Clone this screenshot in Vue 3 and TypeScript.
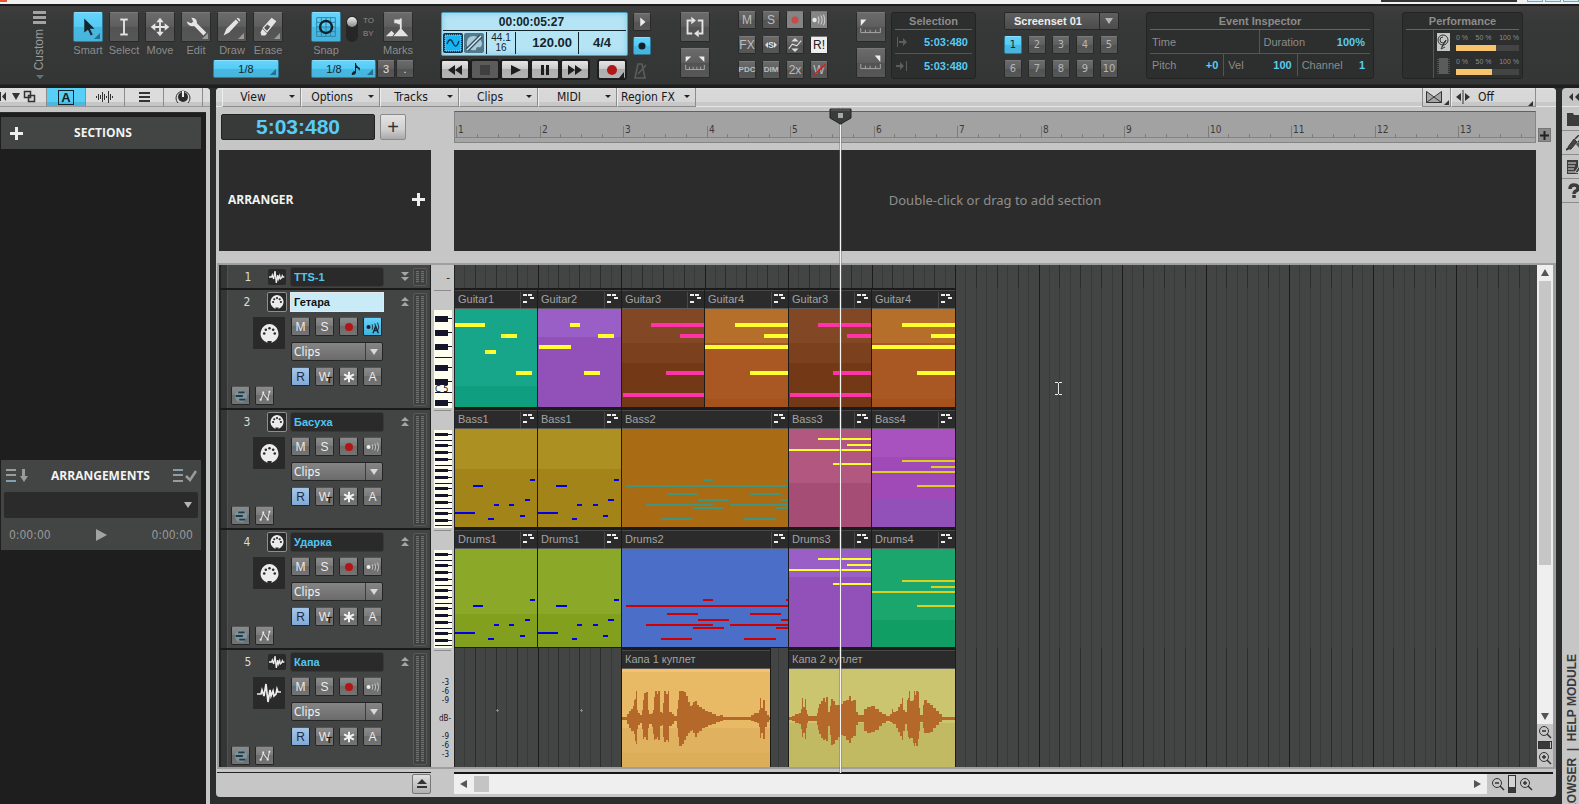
<script setup lang="ts">
import { computed, onMounted, onUnmounted, ref } from 'vue'

type Note = [number, number, number]
interface Clip {
  name: string
  width: number
  gap?: number
  bands: [string, number][]
  color?: string
  thick?: number
  notes?: Note[]
  wave?: [number, number, number][]
}
interface Track {
  id: number
  name: string
  kind: 'midi' | 'audio'
  mini?: boolean
  selected?: boolean
  clips: Clip[]
}

const MEASURE = 83.5
const H = 98

const tools = [
  { name: 'Smart', active: true, corner: true },
  { name: 'Select', active: false, corner: false },
  { name: 'Move', active: false, corner: false },
  { name: 'Edit', active: false, corner: true },
  { name: 'Draw', active: false, corner: true },
  { name: 'Erase', active: false, corner: true },
]
const menus = ['View', 'Options', 'Tracks', 'Clips', 'MIDI', 'Region FX']
const mixButtons = ['M', 'S', 'rec', 'echo', 'FX', 'solo', 'auto', 'R!', 'PDC', 'DIM', '2x', 'W']
const wideTools = ['folder', 'plug', 'notes', 'help']

const guitarA: Note[] = [[29, 14, 54], [58, 25, 25], [44, 62, 39], [1, 84, 82]]
const guitarB: Note[] = [[30, 14, 53], [59, 25, 24], [0, 36, 83], [45, 62, 38]]
const riff: Note[] = [[0, 83, 20], [18, 56, 10], [33, 89, 6], [39, 75, 5], [54, 75, 5], [65, 86, 5], [70, 70, 5], [75, 50, 5]]
const riffLate: Note[] = [[0, 83, 20], [18, 56, 11], [34, 89, 5], [39, 75, 5], [55, 75, 5], [65, 86, 5], [70, 70, 6], [76, 50, 5]]
const longPart: Note[] = [
  [81, 50, 10], [164, 50, 2], [4, 56, 162], [45, 64, 31], [128, 64, 31], [76, 70, 31], [159, 70, 7],
  [24, 75, 67], [108, 75, 58], [71, 78, 31], [154, 78, 12], [39, 89, 31], [122, 89, 32],
]
const lead: Note[] = [[29, 9, 53], [58, 15, 24], [0, 20, 82], [44, 34, 38]]
const leadLow: Note[] = [[30, 31, 53], [59, 37, 24], [0, 42, 83], [45, 56, 38]]

const violet: [string, number][] = [['#9a5fc6', 28], ['#9251b8', H]]
const brown: [string, number][] = [['#824825', 34], ['#7b411e', 54], ['#733917', H]]
const orange: [string, number][] = [['#b66e2b', 34], ['#aa5823', 90], ['#a6521c', H]]
const olive: [string, number][] = [['#ac9022', 40], ['#a38418', H]]
const lime: [string, number][] = [['#8ba828', 65], ['#82a01d', H]]

const tracks: Track[] = [
  { id: 1, name: 'TTS-1', kind: 'audio', mini: true, clips: [] },
  {
    id: 2, name: 'Гетара', kind: 'midi', selected: true,
    clips: [
      { name: 'Guitar1', width: 83, bands: [['#18a68a', 77], ['#109e80', 96], ['#10a069', H]], color: '#ffff2e', thick: 4, notes: [[0, 14, 30], [46, 25, 16], [30, 41, 11], [61, 62, 16]] },
      { name: 'Guitar2', width: 84, bands: violet, color: '#ffff2e', thick: 4, notes: [[32, 14, 10], [60, 25, 16], [1, 36, 32], [46, 62, 16]] },
      { name: 'Guitar3', width: 83, bands: brown, color: '#ff34a8', thick: 4, notes: guitarA },
      { name: 'Guitar4', width: 84, bands: orange, color: '#ffff2e', thick: 4, notes: guitarB },
      { name: 'Guitar3', width: 83, bands: brown, color: '#ff34a8', thick: 4, notes: guitarA },
      { name: 'Guitar4', width: 84, bands: orange, color: '#ffff2e', thick: 4, notes: guitarB },
    ],
  },
  {
    id: 3, name: 'Басуха', kind: 'midi',
    clips: [
      { name: 'Bass1', width: 83, bands: olive, color: '#0000e6', thick: 2, notes: riff },
      { name: 'Bass1', width: 84, bands: olive, color: '#0000e6', thick: 2, notes: riffLate },
      { name: 'Bass2', width: 167, bands: [['#aa6b15', H]], color: '#42957a', thick: 2, notes: longPart },
      { name: 'Bass3', width: 83, bands: [['#b2577f', 54], ['#a64d76', H]], color: '#ffff2e', thick: 2, notes: lead },
      { name: 'Bass4', width: 84, bands: [['#a852c0', 28], ['#a04ab8', 71], ['#9251b8', H]], color: '#dbd022', thick: 2, notes: leadLow },
    ],
  },
  {
    id: 4, name: 'Ударка', kind: 'midi',
    clips: [
      { name: 'Drums1', width: 83, bands: lime, color: '#0000e6', thick: 2, notes: riff },
      { name: 'Drums1', width: 84, bands: lime, color: '#0000e6', thick: 2, notes: riffLate },
      { name: 'Drums2', width: 167, bands: [['#4b6ec8', H]], color: '#d00000', thick: 2, notes: longPart },
      { name: 'Drums3', width: 83, bands: violet, color: '#ffff2e', thick: 2, notes: lead },
      { name: 'Drums4', width: 84, bands: [['#1ba66d', 71], ['#109e64', H]], color: '#dbd022', thick: 2, notes: leadLow },
    ],
  },
  {
    id: 5, name: 'Капа', kind: 'audio',
    clips: [
      {
        name: 'Капа 1 куплет', width: 149, gap: 167,
        bands: [['#f5c16f', 3], ['#e8ba66', 59], ['#e0b25f', 84], ['#dcae59', H]],
        wave: [[0, 1, 1], [4, 1, 1], [5, 4, 5], [7, 7, 9], [9, 9, 12], [11, 12, 12], [12, 18, 15], [13, 19, 22], [14, 27, 25], [15, 8, 10], [16, 5, 6], [18, 3, 4], [20, 8, 10], [21, 18, 20], [22, 25, 18], [24, 26, 21], [26, 8, 9], [27, 4, 5], [30, 5, 8], [31, 8, 15], [32, 21, 21], [33, 27, 20], [35, 24, 18], [36, 27, 21], [38, 6, 7], [40, 5, 6], [41, 15, 18], [42, 27, 23], [44, 24, 21], [46, 27, 23], [47, 6, 7], [50, 4, 5], [52, 2, 2], [55, 9, 9], [56, 18, 18], [57, 27, 27], [60, 27, 25], [62, 26, 21], [64, 22, 17], [66, 16, 14], [68, 12, 12], [70, 13, 11], [71, 16, 14], [73, 17, 18], [75, 13, 14], [77, 11, 12], [80, 9, 9], [83, 7, 8], [86, 6, 6], [90, 4, 5], [94, 2, 3], [98, 3, 2], [101, 1, 1], [127, 1, 1], [129, 3, 2], [132, 5, 3], [135, 5, 4], [137, 8, 8], [138, 20, 19], [139, 10, 14], [141, 18, 20], [143, 7, 8], [145, 3, 3], [147, 1, 1], [148, 1, 1]],
      },
      {
        name: 'Капа 2 куплет', width: 167, gap: 18,
        bands: [['#cbc56f', 54], ['#c1ba63', H]],
        wave: [[0, 1, 1], [3, 2, 2], [6, 4, 4], [10, 5, 5], [12, 9, 10], [13, 20, 18], [14, 11, 14], [16, 19, 20], [17, 8, 9], [18, 4, 4], [19, 2, 2], [28, 5, 6], [29, 10, 11], [30, 14, 15], [32, 17, 19], [34, 20, 21], [36, 16, 20], [37, 21, 22], [39, 6, 7], [41, 12, 16], [42, 19, 26], [44, 17, 25], [46, 13, 21], [49, 13, 18], [51, 14, 16], [54, 17, 17], [57, 18, 21], [60, 22, 24], [62, 17, 19], [64, 18, 17], [67, 6, 6], [69, 3, 3], [73, 3, 3], [75, 9, 12], [78, 11, 14], [82, 12, 13], [86, 9, 11], [90, 6, 7], [93, 4, 4], [97, 2, 2], [101, 4, 3], [103, 9, 4], [104, 6, 5], [107, 7, 9], [109, 11, 13], [111, 14, 17], [113, 20, 21], [114, 8, 12], [116, 6, 5], [118, 18, 12], [119, 20, 18], [120, 27, 20], [121, 17, 19], [124, 18, 24], [125, 27, 27], [126, 23, 24], [127, 27, 27], [129, 26, 20], [130, 10, 12], [131, 3, 3], [134, 13, 9], [135, 18, 14], [138, 15, 14], [141, 13, 13], [144, 10, 9], [147, 7, 6], [150, 4, 3], [153, 1, 1], [166, 1, 1]],
      },
    ],
  },
]

const eighths: string[] = []
const quarters: string[] = []
const bars: string[] = []
const ticks: string[] = []
for (let i = 0; i < 320; i++) {
  const x = Math.round((i * MEASURE) / 8)
  const seg = `M${x} 0h1v120h-1z`
  if (i % 8 === 0) bars.push(seg)
  else if (i % 2 === 0) quarters.push(seg)
  else eighths.push(seg)
  if (i % 2 === 0) ticks.push(i % 8 === 0 ? `M${x + 1} 14h1v12h-1z` : `M${x + 1} 22h1v4h-1z`)
}

const windowWidth = ref(window.innerWidth)
const onResize = () => { windowWidth.value = window.innerWidth }
onMounted(() => window.addEventListener('resize', onResize))
onUnmounted(() => window.removeEventListener('resize', onResize))
const barNumbers = computed(() => {
  const count = Math.max(1, Math.floor((windowWidth.value - 515) / MEASURE) + 1)
  return Array.from({ length: count }, (_, i) => ({ n: i + 1, x: Math.round(i * MEASURE) + 3 }))
})

const bigKeys = [6, 20, 34, 55, 69, 90]
const bigLines = [47, 82]
const smallKeys = [3, 14, 21, 28, 39, 46, 57, 64, 71, 82, 89]
const smallLines = [10, 35, 53, 78, 95]

function bandRects(bands: [string, number][]) {
  return bands.map(([fill, end], i) => {
    const y = i ? bands[i - 1][1] : 0
    return { fill, y, h: end - y }
  })
}
function wavePath(w: [number, number, number][]) {
  let top = `M0 49`
  let bottom = ''
  for (let i = 0; i < w.length - 1; i++) {
    top += `V${49 - w[i][1]}H${w[i + 1][0]}`
    const j = w.length - 2 - i
    bottom += `V${50 + w[j][2]}H${w[j][0]}`
  }
  return `${top}${bottom}Z`
}

const names = ref(tracks.map((t) => t.name))
</script>

<template>
  <div class="daw">
    <div class="titlebar"><i class="logo"></i><i class="wintitle"></i><i v-for="n in 3" :key="n" class="winbtn"></i></div>

    <header class="toolbar">
      <button class="custom" aria-label="Custom modules">
        <i class="burger"></i><span>Custom</span><i class="tri blue"></i>
      </button>

      <div class="tools">
        <div v-for="t in tools" :key="t.name" class="tool">
          <button class="btn big" :class="{ on: t.active, corner: t.corner }" :aria-label="t.name">
            <svg viewBox="0 0 30 30" width="28" height="28">
              <path v-if="t.name === 'Smart'" d="M11 6v15l4-3 3 6 2-1-3-6h5z" fill="#16242b" />
              <path v-else-if="t.name === 'Select'" d="M11 7h3l1 1 1-1h3M15 8v14M11 23h3l1-1 1 1h3" fill="none" stroke="#e4e4e4" stroke-width="2" />
              <g v-else-if="t.name === 'Move'" fill="#e4e4e4"><path d="M14 9h2v5h5v2h-5v5h-2v-5H9v-2h5z" /><path d="M15 5l4 5h-8zM15 25l4-5h-8zM5 15l5-4v8zM25 15l-5-4v8z" /></g>
              <path v-else-if="t.name === 'Edit'" d="M5 9l5 2 2-2-2-4q6 0 6 5l0 1 10 10-3 3-10-10q-6 1-8-5z" fill="#e4e4e4" />
              <path v-else-if="t.name === 'Draw'" d="M6 24l3-7L19 7l3 3-10 11zM20 6l1-1q2 0 3 3l-1 1z" fill="#e4e4e4" />
              <g v-else fill="#e4e4e4"><path d="M9 17l5 5-2 2H8l-1-3z" /><path d="M10 16l9-10 4 3-9 11z" fill="none" stroke="#e4e4e4" stroke-width="1.4" /><path d="M14 12l5-6 4 3-5 6z" /></g>
            </svg>
          </button>
          <span>{{ t.name }}</span>
        </div>
        <button class="btn on corner res">1/8</button>
      </div>

      <div class="snap">
        <div class="snaprow">
          <div class="tool">
            <button class="btn big on" aria-label="Snap">
              <svg viewBox="0 0 30 30" width="28" height="28" fill="none"><path d="M5 5h20v20H5zM10 5v20M15 5v20M20 5v20M5 10h20M5 15h20M5 20h20" stroke="#2c7fa3" /><circle cx="15" cy="15" r="6.500" stroke="#12222b" stroke-width="2.500" /></svg>
            </button>
            <span>Snap</span>
          </div>
          <button class="toggle" role="switch" aria-checked="true" aria-label="Snap to or by"></button>
          <div class="toby"><span>TO</span><span>BY</span></div>
          <div class="tool">
            <button class="btn big" aria-label="Marks">
              <svg viewBox="0 0 30 30" width="28" height="28" fill="#e4e4e4"><path d="M2 25l6-6 3 3-2 3zM10 25l8-9 8 9zM17 6h2v11h-2zM11 7h8v5h-4l-1-1h-3z" /></svg>
            </button>
            <span>Marks</span>
          </div>
        </div>
        <div class="snapres">
          <button class="btn on corner">1/8
            <svg viewBox="0 0 10 12" width="10" height="12"><path d="M5 0q0 3 4 5q0 2-1 3q0-3-3-3v5q-1 2-3 2t-1-2q1-2 3-2V0z" fill="#14242c" /></svg>
          </button>
          <button class="btn">3</button>
          <button class="btn">.</button>
        </div>
      </div>

      <div class="transport">
        <div class="lcdrow">
          <div class="lcd">
            <div class="lcdtime">00:00:05:27</div>
            <div class="lcdinfo">
              <svg viewBox="0 0 20 20" width="20" height="20"><rect width="20" height="20" rx="2" fill="#12324a" /><rect x="2" y="2" width="16" height="16" fill="#18b5f3" stroke="#9adfff" stroke-dasharray="1 1" /><path d="M4 11q3-8 6-1t6-2" fill="none" stroke="#12324a" stroke-width="1.3" /></svg>
              <svg viewBox="0 0 20 20" width="20" height="20"><rect width="20" height="20" rx="2" fill="#54798a" /><path d="M3 13Q2 3 9 3t9 7q0 5-4 4-2 0-2 3-7 1-9-4z" fill="#a9cbd8" /><path d="M3 17L17 3" stroke="#33505e" stroke-width="4" /><path d="M3 17L17 3" stroke="#d6edf6" stroke-width="1.5" /></svg>
              <span class="rate">44.1<br />16</span>
              <b class="tempo">120.00</b>
              <b class="meterval">4/4</b>
            </div>
          </div>
          <div class="lcdside">
            <button class="btn" aria-label="Expand"><svg viewBox="0 0 18 18" width="16" height="16"><path d="M7 4l6 5-6 5z" fill="#eee" /></svg></button>
            <button class="btn on" aria-label="Audio engine"><svg viewBox="0 0 18 18" width="16" height="16"><circle cx="9" cy="9" r="4" fill="#10202a" /></svg></button>
          </div>
        </div>
        <div class="playrow">
          <button class="pbtn" aria-label="Rewind"><svg viewBox="0 0 28 18"><path d="M14 4v10l-7-5zM21 4v10l-7-5z" /></svg></button>
          <button class="pbtn dim" aria-label="Stop"><svg viewBox="0 0 28 18"><path d="M9 4h10v10H9z" /></svg></button>
          <button class="pbtn" aria-label="Play"><svg viewBox="0 0 28 18"><path d="M10 4l10 5-10 5z" /></svg></button>
          <button class="pbtn" aria-label="Pause"><svg viewBox="0 0 28 18"><path d="M10 4h3v10h-3zM15 4h3v10h-3z" /></svg></button>
          <button class="pbtn" aria-label="Forward"><svg viewBox="0 0 28 18"><path d="M7 4v10l7-5zM14 4v10l7-5z" /></svg></button>
          <button class="pbtn rec" aria-label="Record"><svg viewBox="0 0 28 18"><circle cx="14" cy="9" r="5" fill="#b01717" /><path d="M26 11v6h-5z" /></svg></button>
          <svg class="metro" viewBox="0 0 22 20" width="22" height="20"><path d="M6 18L9 4h4l3 14zM9 14l8-9" fill="none" stroke="#5c5c5c" stroke-width="1.6" /></svg>
        </div>
      </div>

      <div class="stack">
        <button class="btn big" aria-label="Loop"><svg viewBox="0 0 30 30" width="28" height="28"><path d="M11 8H7v14h5M19 22h4V8h-5" fill="none" stroke="#e4e4e4" stroke-width="2" /><path d="M11 4l5 4-5 4zM19 18v8l-5-4z" fill="#e4e4e4" /></svg></button>
        <button class="btn big" aria-label="Punch"><svg viewBox="0 0 30 30" width="28" height="28"><path d="M5 8h6l-6 6zM25 8h-6l6 6z" fill="#eee" /><path d="M5 17v5h20v-5M9 19v3M13 19v3M17 19v3M21 19v3" fill="none" stroke="#aaa" /></svg></button>
      </div>

      <div class="mixgrid">
        <button v-for="m in mixButtons" :key="m" class="btn sm" :class="{ white: m === 'R!', lit: m === 'rec' || m === 'echo', tiny: m === 'PDC' || m === 'DIM' }" :aria-label="m">
          <svg v-if="m === 'rec'" viewBox="0 0 18 18" width="16" height="16"><circle cx="9" cy="9" r="4" fill="#c94b48" /></svg>
          <svg v-else-if="m === 'echo'" viewBox="0 0 18 18" width="16" height="16"><circle cx="4" cy="9" r="2.500" fill="#e8e8e8" /><path d="M8 5q2 4 0 8M11 4q3 5 0 10M14 3q3 6 0 12" fill="none" stroke="#ccc" stroke-width="1.2" /></svg>
          <svg v-else-if="m === 'auto'" viewBox="0 0 18 18" width="16" height="16"><path d="M9 1l4 4H5zM9 17l4-4H5z" fill="#ddd" /><path d="M2 13l4-5 5 2 5-6" fill="none" stroke="#ddd" stroke-width="1.300" /></svg>
          <template v-else-if="m === 'solo'"><i class="sl"></i><span class="solo">S</span><i class="sr"></i></template>
          <template v-else>{{ m }}</template>
          <svg v-if="m === 'W'" class="strike" viewBox="0 0 18 18" width="16" height="16"><path d="M3 15L16 3" stroke="#d02020" stroke-width="2" /></svg>
        </button>
      </div>

      <div class="selgroup">
        <div class="stack">
          <button class="btn big" aria-label="Set from"><svg viewBox="0 0 30 30" width="28" height="28"><path d="M4 7h6l-6 7z" fill="#eee" /><path d="M4 16v5h21v-5M9 18v3M14 18v3M20 18v3" fill="none" stroke="#aaa" /></svg></button>
          <button class="btn big" aria-label="Set thru"><svg viewBox="0 0 30 30" width="28" height="28"><path d="M25 7h-6l6 7z" fill="#eee" /><path d="M4 16v5h21v-5M9 18v3M14 18v3M20 18v3" fill="none" stroke="#aaa" /></svg></button>
        </div>
        <section class="panel sel">
          <h2>Selection</h2>
          <div class="selrow"><svg viewBox="0 0 12 12" width="12" height="12"><path d="M1 1h1v10H1zM3 5h4V2l4 4-4 4V7H3z" fill="#5d5d5d" /></svg><b>5:03:480</b></div>
          <div class="selrow"><svg viewBox="0 0 12 12" width="12" height="12"><path d="M10 1h1v10h-1zM0 5h4V2l4 4-4 4V7H0z" fill="#5d5d5d" /></svg><b>5:03:480</b></div>
        </section>
      </div>

      <div class="screenset">
        <div class="selwrap"><select aria-label="Screenset"><option>Screenset 01</option></select><i class="tri"></i></div>
        <button v-for="n in 10" :key="n" class="btn sm num" :class="{ on: n === 1 }">{{ n }}</button>
      </div>

      <section class="panel inspector">
        <h2>Event Inspector</h2>
        <div class="irow two"><p><span>Time</span></p><p><span>Duration</span><b>100%</b></p></div>
        <div class="irow three"><p><span>Pitch</span><b>+0</b></p><p><span>Vel</span><b>100</b></p><p><span>Channel</span><b>1</b></p></div>
      </section>

      <section class="panel perf">
        <h2>Performance</h2>
        <div class="perfbody">
          <div v-for="(v, i) in [63, 57]" :key="v" class="perfrow">
            <svg v-if="i === 0" viewBox="0 0 13 18" width="13" height="18"><rect width="13" height="18" fill="#c6c6c6" /><circle cx="6" cy="7" r="5" fill="none" stroke="#333" /><path d="M6 4a3 3 0 1 0 3 3l-4 7M8 8l-4 8 4-2" fill="none" stroke="#333" /></svg>
            <svg v-else viewBox="0 0 13 18" width="13" height="18"><rect x="2" y="1" width="9" height="16" fill="#5b5b5b" /><path d="M1 2v16M12 2v16" stroke="#777" stroke-dasharray="1 1" /></svg>
            <div class="perfbar"><div class="scale"><span>0 %</span><span>50 %</span><span>100 %</span></div><div class="bar"><i :style="{ width: v + '%' }"></i></div></div>
          </div>
        </div>
      </section>
    </header>

    <div class="work">
      <aside class="left">
        <nav class="tabs">
          <button class="tab first" aria-label="Dock"><svg viewBox="0 0 46 18" width="46" height="18"><path d="M0 4h1v9H0zM6 4v9L2 8.500z" fill="#333" /><path d="M12 5h8l-4 7z" fill="#333" /><path d="M24.500 3.500h6v6h-6zM28.500 7.500h6v6h-6z" fill="#d5d5d5" stroke="#333" stroke-width="1.500" /></svg></button>
          <button class="tab on" aria-label="Arranger"><b>A</b></button>
          <button class="tab" aria-label="Clip"><svg viewBox="0 0 18 12" width="18" height="12"><path d="M.5 5v2M2.500 3v6M4.500 4v4M6.500 1v10M8.500 3v6M10.500 5v2M12.500 0v12M14.500 3v6M16.500 5v2" stroke="#333" /></svg></button>
          <button class="tab" aria-label="Track"><i class="lines"></i></button>
          <button class="tab" aria-label="ProChannel"><svg viewBox="0 0 18 16" width="18" height="16"><path d="M4 14A7 7 0 1 1 14 14" fill="none" stroke="#333" /><circle cx="9" cy="8" r="5" fill="#2c2c2c" /><path d="M9 2v6" stroke="#eee" stroke-width="2" /></svg></button>
          <span class="tab rest"></span>
        </nav>
        <div class="leftbody">
          <div class="sections"><button class="plus" aria-label="Add section"></button><h3>SECTIONS</h3></div>
          <div class="arrs">
            <div class="arrhead">
              <svg viewBox="0 0 22 14" width="22" height="14"><path d="M0 1h10M0 6h10" stroke="#9b9b9b" stroke-width="2" /><path d="M0 12h10" stroke="#7fa0ad" stroke-width="2" /><path d="M16 0h3v7h3l-4 6-4-6h2z" fill="#9b9b9b" /></svg>
              <h3>ARRANGEMENTS</h3>
              <svg viewBox="0 0 24 14" width="24" height="14"><path d="M0 1h10" stroke="#7fa0ad" stroke-width="2" /><path d="M0 6h10M0 12h10" stroke="#9b9b9b" stroke-width="2" /><path d="M13 7l4 4 6-9" fill="none" stroke="#9b9b9b" stroke-width="2.500" /></svg>
            </div>
            <div class="arrsel"><select aria-label="Arrangement"><option></option></select><i class="tri"></i></div>
            <div class="arrtime"><span>0:00:00</span><button aria-label="Play arrangement"></button><span>0:00:00</span></div>
          </div>
        </div>
      </aside>

      <main class="main">
        <nav class="menubar">
          <button v-for="m in menus" :key="m" class="menu"><span>{{ m }}</span><i></i></button>
          <span class="fill"></span>
          <button class="menu xf" aria-label="Crossfade"><svg viewBox="0 0 26 16" width="26" height="16"><path d="M2.500 2.500v11h15v-11l-7.500 6z" fill="#a5a5a5" /><path d="M2.500 2.500v11h15v-11l-15 11M2.500 2.500l15 11" fill="none" stroke="#333" /><path d="M25 11v5h-5z" fill="#333" /></svg></button>
          <div class="menu off"><svg viewBox="0 0 16 14" width="16" height="14"><path d="M6 3v8L1 7zM10 3v8l5-4zM7.500 0h1v14h-1z" fill="#333" /></svg><select aria-label="Ripple edit"><option>Off</option></select><svg class="cnr" viewBox="0 0 5 5" width="5" height="5"><path d="M5 0v5H0z" fill="#333" /></svg></div>
          <span class="end"></span>
        </nav>

        <div class="rulerrow">
          <div class="now">
            <output>5:03:480</output>
            <button aria-label="Add track">+</button>
          </div>
          <div class="ruler">
            <svg width="100%" height="31">
              <path :d="ticks.join('')" fill="#7c7c7c" />
              <text v-for="b in barNumbers" :key="b.n" :x="b.x" y="21">{{ b.n }}</text>
            </svg>
          </div>
          <button class="miniadd" aria-label="Add ruler"><svg viewBox="0 0 9 9" width="9" height="9"><path d="M4.500 0v9M0 4.500h9" stroke="#222" stroke-width="2" /></svg></button>
        </div>

        <div class="arrangerrow">
          <div class="arrname"><h3>ARRANGER</h3><button class="plus" aria-label="Add arrangement"></button></div>
          <div class="arrlane">Double-click or drag to add section</div>
        </div>

        <div class="tracks">
          <div class="rows">
            <div v-for="(t, ti) in tracks" :key="t.id" class="row" :class="{ mini: t.mini }">
              <div class="head">
                <div class="side">
                  <div class="idline">
                    <span class="num">{{ t.id }}</span>
                    <span class="kind" :class="t.kind">
                      <svg v-if="t.kind === 'midi'" viewBox="0 0 18 18" width="14" height="14"><path d="M9 0a9 9 0 0 1 5 16q-2 1-3 2v-2H7v2q-1-1-3-2A9 9 0 0 1 9 0z" fill="#ececec" /><g fill="#2a2a2a"><circle cx="4" cy="9" r="1.400" /><circle cx="5.500" cy="5.500" r="1.400" /><circle cx="9" cy="4" r="1.400" /><circle cx="12.500" cy="5.500" r="1.400" /><circle cx="14" cy="9" r="1.400" /></g></svg>
                      <svg v-else viewBox="0 0 24 18" width="16" height="14"><path d="M0 9h4l1-3 2 6 2-12 2 18 2-12 1 6 2-5 1 5 2-2 1-3 1 2h2" fill="none" stroke="#ececec" stroke-width="2" /></svg>
                    </span>
                  </div>
                  <template v-if="!t.mini">
                    <div class="bigkind">
                      <svg v-if="t.kind === 'midi'" viewBox="0 0 18 18" width="19" height="19"><path d="M9 0a9 9 0 0 1 5 16q-2 1-3 2v-2H7v2q-1-1-3-2A9 9 0 0 1 9 0z" fill="#ececec" /><g fill="#2a2a2a"><circle cx="4" cy="9" r="1.200" /><circle cx="5.500" cy="5.500" r="1.200" /><circle cx="9" cy="4" r="1.200" /><circle cx="12.500" cy="5.500" r="1.200" /><circle cx="14" cy="9" r="1.200" /></g></svg>
                      <svg v-else viewBox="0 0 24 20" width="24" height="20"><path d="M0 11h4l1-4 2 6 2-12 2 18 2-12 1 6 2-5 1 5 2-2 1-5 1 3h3" fill="none" stroke="#ececec" stroke-width="1.700" /></svg>
                    </div>
                    <div class="lower">
                      <button class="tb" aria-label="Take lanes"><svg viewBox="0 0 18 18" width="16" height="16"><circle cx="9" cy="9" r="7" fill="#7794a0" /><path d="M6 5h7M3 9h8M7 13h7" stroke="#27383f" stroke-width="2" /></svg></button>
                      <button class="tb" aria-label="Automation lanes"><svg viewBox="0 0 18 18" width="16" height="16"><path d="M4 14l3-8 5 7 2-9" fill="none" stroke="#ddd" stroke-width="1.200" /><path d="M3 12h2v2H3zM6 4h2v2H6zM11 12h2v2h-2zM13 3h2v2h-2z" fill="#eee" /></svg></button>
                    </div>
                  </template>
                </div>
                <div class="ctl">
                  <input v-model="names[ti]" class="tname" :class="{ sel: t.selected }" :aria-label="'Track ' + t.id + ' name'" />
                  <template v-if="!t.mini">
                    <div class="tbs">
                      <button class="tb">M</button><button class="tb">S</button>
                      <button class="tb" aria-label="Arm"><svg viewBox="0 0 18 18" width="16" height="16"><circle cx="9" cy="9" r="4.500" fill="#b41414" /></svg></button>
                      <button class="tb" :class="{ cyan: t.selected }" aria-label="Input echo"><svg viewBox="0 0 18 18" width="16" height="16"><circle cx="4" cy="9" r="2.300" :fill="t.selected ? '#12242c' : '#eee'" /><path d="M8 6q1.500 3 0 6M11 5q2 4 0 8M14 4q3 5 0 10" fill="none" :stroke="t.selected ? '#12242c' : '#ccc'" /><path v-if="t.selected" d="M9 16l3-8 3 8M10 13h4" fill="none" stroke="#12242c" stroke-width="1.500" /></svg></button>
                    </div>
                    <div class="edit"><select :aria-label="'Track ' + t.id + ' edit filter'"><option>Clips</option></select><i class="tri"></i></div>
                    <div class="tbs">
                      <button class="tb read">R</button>
                      <button class="tb w" aria-label="Write">W<small>T</small></button>
                      <button class="tb" aria-label="Freeze"><svg viewBox="0 0 18 18" width="16" height="16"><path d="M9 3v12M3.500 6l11 6M14.500 6l-11 6" stroke="#f2f2f2" stroke-width="2.200" /></svg></button>
                      <button class="tb">A</button>
                    </div>
                  </template>
                </div>
                <svg class="chev" viewBox="0 0 8 9" width="8" height="9"><path :d="t.mini ? 'M0 0h8L4 4zM0 5h8L4 9z' : 'M4 0l4 4H0zM4 5l4 4H0z'" fill="#a5a5a5" /></svg>
                <div class="vu"><i></i><i></i></div>
              </div>

              <div class="keys">
                <template v-if="t.kind === 'midi'">
                  <svg viewBox="0 0 18 98" width="18" height="98" shape-rendering="crispEdges">
                    <rect width="18" height="98" fill="#fffff0" />
                    <g v-if="t.id === 2" fill="#14142a">
                      <template v-for="k in bigKeys" :key="k"><rect x="1" :y="k" width="13" height="6" /><rect x="14" :y="k + 2" width="4" height="1" /></template>
                      <rect v-for="l in bigLines" :key="l" x="1" :y="l" width="17" height="1" />
                    </g>
                    <g v-else fill="#14142a">
                      <template v-for="k in smallKeys" :key="k"><rect x="1" :y="k" width="13" height="3" /><rect x="14" :y="k + 1" width="4" height="1" /></template>
                      <rect v-for="l in smallLines" :key="l" x="1" :y="l" width="17" height="1" />
                    </g>
                    <text v-if="t.id === 2" x="1" y="82" class="ctext">C 5</text>
                  </svg>
                </template>
                <span v-else-if="t.mini" class="dash">-</span>
                <div v-else class="db"><span>-3</span><span>-6</span><span>-9</span><span class="mid">dB-</span><span>-9</span><span>-6</span><span>-3</span></div>
              </div>

              <div class="lane">
                <svg class="grid" width="100%" height="120" shape-rendering="crispEdges">
                  <path :d="eighths.join('')" fill="#383939" />
                  <path :d="quarters.join('')" :fill="t.kind === 'midi' ? '#383939' : '#2b2c2c'" />
                  <path :d="bars.join('')" fill="#1b1b1b" />
                  <path v-if="t.kind === 'audio' && !t.mini" d="M42 62h3v1h-3zM43 61h1v3h-1zM126 62h3v1h-3zM127 61h1v3h-1z" fill="#888" />
                </svg>
                <article v-for="(c, ci) in t.clips" :key="ci" class="clip" :style="{ width: c.width + 'px', marginLeft: (c.gap ?? 0) + 'px' }">
                  <header><span>{{ c.name }}</span>
                    <svg v-if="c.notes" viewBox="0 0 17 16" width="17" height="16" shape-rendering="crispEdges"><path d="M0 0h1v16H0z" fill="#484848" /><path d="M3 2h4v2H3zM8 2h4v2H8zM10 5h4v2h-4zM3 9h4v2H3z" fill="#eee" /></svg>
                  </header>
                  <svg :width="c.width - 1" height="98" shape-rendering="crispEdges">
                    <rect v-for="(b, bi) in bandRects(c.bands)" :key="bi" :y="b.y" width="100%" :height="b.h" :fill="b.fill" />
                    <rect v-for="(n, ni) in c.notes" :key="'n' + ni" :x="n[0]" :y="n[1]" :width="n[2]" :height="c.thick" :fill="c.color" />
                    <path v-if="c.wave" :d="wavePath(c.wave)" fill="#b4692a" />
                  </svg>
                </article>
              </div>
            </div>
          </div>
          <div class="vscroll">
            <div class="track"><i class="up"></i><i class="thumb"></i><i class="space"></i><i class="down"></i></div>
            <button aria-label="Zoom out vertically"><svg viewBox="0 0 14 14" width="14" height="14"><circle cx="6" cy="6" r="4.500" fill="none" stroke="#333" /><path d="M4 6h4M9 9l4 4" stroke="#333" stroke-width="1.500" /></svg></button>
            <i class="vz"></i>
            <button aria-label="Zoom in vertically"><svg viewBox="0 0 14 14" width="14" height="14"><circle cx="6" cy="6" r="4.500" fill="none" stroke="#333" /><path d="M4 6h4M6 4v4M9 9l4 4" stroke="#333" stroke-width="1.500" /></svg></button>
          </div>
        </div>

        <div class="bottom">
          <div class="bleft"><button aria-label="Show bus pane"><svg viewBox="0 0 10 10" width="10" height="10"><path d="M5 0l5 5H0zM0 7h10v2H0z" fill="#333" /></svg></button></div>
          <div class="hscroll"><i class="la"></i><i class="hthumb"></i><i class="ra"></i></div>
          <div class="hz">
            <button aria-label="Zoom out"><svg viewBox="0 0 14 14" width="14" height="14"><circle cx="6" cy="6" r="4.500" fill="none" stroke="#333" /><path d="M4 6h4M9 9l4 4" stroke="#333" stroke-width="1.500" /></svg></button>
            <i></i>
            <button aria-label="Zoom in"><svg viewBox="0 0 14 14" width="14" height="14"><circle cx="6" cy="6" r="4.500" fill="none" stroke="#333" /><path d="M4 6h4M6 4v4M9 9l4 4" stroke="#333" stroke-width="1.500" /></svg></button>
          </div>
        </div>

        <div class="playhead">
          <svg viewBox="0 0 23 17" width="23" height="17"><path d="M1 1h21v9l-7 4-3 2h-1l-3-2-7-4z" fill="#3a3b3b" stroke="#222" /><path d="M2 2h19" stroke="#666" /><path d="M9 5h5v5H9z" fill="#a8a8a8" /></svg>
        </div>
        <svg class="ibeam" viewBox="0 0 7 13" width="7" height="13"><path d="M0 .5h3M4 .5h3M3.500 1v11M0 12.500h3M4 12.500h3" stroke="#e8e8e8" /></svg>
      </main>

      <aside class="right">
        <button class="rb top" aria-label="Expand browser"><svg viewBox="0 0 12 10" width="12" height="10"><path d="M5 1v8L1 5zM11 1v8L7 5z" fill="#333" /></svg></button>
        <button v-for="w in wideTools" :key="w" class="rb" :aria-label="w">
          <svg viewBox="0 0 18 16" width="18" height="16">
            <path v-if="w === 'folder'" d="M1 2h6l1 2h10v11H1z" fill="#3c3c3c" />
            <g v-else-if="w === 'plug'"><path d="M0 15l3-2" stroke="#333" stroke-width="2" /><path d="M2 12l6-8 3 3-6 7q-3 1-3-2z" fill="#444" stroke="#333" /><path d="M9 4l4-4M12 7l4-4" stroke="#333" stroke-width="1.500" /><path d="M11 8l5 6" stroke="#555" stroke-width="3" /></g>
            <g v-else-if="w === 'notes'"><path d="M1 1h11v14H1z" fill="#3c3c3c" /><path d="M2 4h8M2 7h7M2 10h6M2 13h7" stroke="#ddd" /><path d="M9 13l7-10 3 2-8 9z" fill="#3c3c3c" stroke="#c6c6c6" /></g>
            <path v-else d="M4 6q0-4 4-4t4 3q0 2-2 3t-2 3M8 12v3" fill="none" stroke="#3c3c3c" stroke-width="3.500" />
          </svg>
        </button>
        <div class="vtext"><span>BROWSER &nbsp;|&nbsp; HELP MODULE</span></div>
      </aside>
    </div>
  </div>
</template>

<style>
body { background: #2c2c2c; }
html, body { overflow: hidden; }
</style>

<style scoped>
* { box-sizing: border-box; }
.daw { min-height: 100vh; height: 100vh; display: flex; flex-direction: column; background: #2c2d2d; font: 11px/14px "Liberation Sans", Arial, sans-serif; color: #8c8c8c; overflow: hidden; }
button { font: inherit; color: inherit; padding: 0; margin: 0; border: 0; background: none; display: flex; align-items: center; justify-content: center; flex: none; }
select, input { font: inherit; color: inherit; appearance: none; border: 0; margin: 0; background: none; outline: none; border-radius: 0; min-width: 0; }
h2, h3, p { margin: 0; }
svg { display: block; flex: none; }
.fill { flex: 1; }
.tri { width: 0; height: 0; border: 4px solid transparent; border-top: 6px solid #b5b5b5; border-bottom: 0; pointer-events: none; flex: none; }

.titlebar { height: 4px; background: #f0f0f0; display: flex; align-items: flex-start; justify-content: flex-end; flex: none; }
.titlebar i { height: 2px; }
.logo { width: 7px; background: #e4572e; margin-right: auto; }
.wintitle { width: 136px; background: #333; margin-right: 8px; }
.winbtn { width: 16px; background: #d5f0f8; border: 1px solid #7aa; border-top: 0; margin-left: 2px; }

.toolbar { height: 84px; flex: none; display: flex; align-items: flex-start; gap: 28px; padding: 6px 0 0 33px; background: linear-gradient(#3f3e3f, #373838 16px, #343535 78px, #1e1e1e 79px); border-top: 2px solid #1c1c1c; }
.custom { width: 13px; flex-direction: column; gap: 5px; margin: -1px -1px 0 0; }
.custom span { writing-mode: vertical-rl; transform: rotate(180deg); font-size: 12px; line-height: 13px; color: #9b9b9b; }
.burger { width: 13px; height: 13px; background: repeating-linear-gradient(#a3a3a3 0 3px, #333 3px 5px); }
.tri.blue { border-top: 4px solid #5c7582; }

.btn { background: linear-gradient(#6b6b6b, #5e5e5e 48%, #535353 50%, #575757); border: 1px solid #2a2a2a; border-top-color: #797979; border-radius: 2px; color: #e0e0e0; position: relative; }
.btn.big { width: 30px; height: 30px; }
.btn.on { background: linear-gradient(#66d3fb, #54cbf4 48%, #46b9e3 50%, #48b4dc); color: #14242c; border-color: #2e7a98; border-top-color: #8ae0ff; }
.btn.corner::after { content: ""; position: absolute; right: 2px; bottom: 2px; border: 3px solid transparent; border-right-color: #9a9a9a; border-bottom-color: #9a9a9a; }
.btn.on.corner::after { border-right-color: #23718f; border-bottom-color: #23718f; }
.btn.sm { width: 18px; height: 18px; font-size: 12px; line-height: 14px; }
.tools { width: 210px; display: grid; grid-template-columns: repeat(6, 30px); column-gap: 6px; row-gap: 2px; }
.tool { width: 30px; display: flex; flex-direction: column; align-items: center; }
.tool span { margin-top: 1px; white-space: nowrap; }
.res { width: 66px; height: 18px; grid-column: 4 / 7; justify-self: end; margin-right: 4px; margin-top: 1px; }
.snap { width: 102px; }
.snaprow { display: flex; }
.toggle { width: 12px; height: 26px; margin: 4px 5px 0; background: #262626; border-radius: 6px; align-items: flex-start; }
.toggle::before { content: ""; width: 10px; height: 10px; margin-top: 1px; border-radius: 50%; background: linear-gradient(#eee, #8a8a8a); }
.toby { width: 20px; display: flex; flex-direction: column; font: 8px/13px "Liberation Sans", Arial, sans-serif; padding-top: 2px; }
.snapres { display: flex; gap: 1px; margin-top: 3px; }
.snapres .btn { height: 18px; width: 18px; }
.snapres .btn:first-child { width: 65px; gap: 9px; }

.transport { width: 211px; }
.lcdrow { display: flex; gap: 5px; }
.lcd { width: 187px; height: 44px; background: #b5e4f5; border: 1px solid #4b9dbb; border-radius: 2px; color: #14242c; padding: 0 1px; box-shadow: inset 0 0 6px #7fcbe6; }
.lcdtime { height: 18px; text-align: center; font: bold 12px/19px "Liberation Sans", Arial, sans-serif; border-bottom: 1px solid #14242c; padding-right: 6px; }
.lcdinfo { display: flex; align-items: center; height: 23px; gap: 1px; }
.rate { width: 30px; text-align: center; font: 10px/10px "Liberation Sans", Arial, sans-serif; border-left: 1px solid #14242c; border-right: 1px solid #14242c; margin-left: 1px; padding-top: 1px; height: 22px; }
.tempo { width: 62px; text-align: right; padding-right: 6px; font-size: 13px; line-height: 22px; border-right: 1px solid #14242c; }
.meterval { width: 44px; text-align: center; font-size: 13px; }
.lcdside { display: flex; flex-direction: column; gap: 6px; padding-top: 1px; }
.lcdside .btn { width: 18px; height: 18px; }
.playrow { display: flex; gap: 2px; margin-top: 4px; }
.pbtn { width: 28px; height: 19px; background: linear-gradient(#e6e6e6, #c9c9c9 48%, #aeaeae 50%, #b4b4b4); border: 1px solid #1d1d1d; border-radius: 2px; fill: #1e1e1e; box-shadow: 0 0 0 1px #1d1d1d; }
.pbtn svg { width: 28px; height: 18px; }
.pbtn.dim { background: #5b5b5b; fill: #3f3f3f; }
.pbtn.rec { margin-left: 7px; }
.metro { margin-left: 1px; }
.stack { display: flex; flex-direction: column; gap: 6px; width: 30px; }
.mixgrid { display: grid; grid-template-columns: repeat(4, 18px); gap: 7px 6px; width: 90px; margin-top: -1px; }
.mixgrid .btn { color: #bdbdbd; }
.mixgrid .white { background: #eee; color: #222; }
.mixgrid .lit { background: #858585; }
.mixgrid .tiny { font-size: 8px; font-weight: bold; }
.solo { font-size: 9px; font-weight: bold; color: #ddd; }
.sl { border: 3px solid transparent; border-left: 0; border-right-color: #ddd; }
.sr { border: 3px solid transparent; border-right: 0; border-left-color: #ddd; }
.strike { position: absolute; left: 0; top: 0; }
.selgroup { display: flex; gap: 5px; }

.panel { background: #2d2e2e; border: 1px solid #232323; border-radius: 3px; height: 67px; padding: 0 3px; }
.panel h2 { font: bold 11px/16px "Liberation Sans", Arial, sans-serif; text-align: center; border-bottom: 1px solid #656565; height: 17px; }
.panel b { color: #58cbf2; }
.sel { width: 85px; }
.selrow { height: 24px; display: flex; align-items: center; justify-content: space-between; padding: 0 4px 0 1px; border-bottom: 1px solid #555; }
.selrow:last-child { border: 0; }
.screenset { width: 114px; display: grid; grid-template-columns: repeat(5, 18px); gap: 6px; }
.selwrap { grid-column: 1 / 6; width: 115px; height: 18px; display: flex; align-items: center; background: linear-gradient(#5f5f5f, #4b4b4b); border: 1px solid #282828; border-radius: 2px; color: #eee; font-weight: bold; }
.selwrap select { flex: 1; height: 16px; border-right: 1px solid #282828; padding: 0 0 0 9px; }
.selwrap .tri { margin: 0 5px; }
.btn.num { color: #b5b5b5; font-size: 11px; }
.btn.num.on { color: #14242c; }
.inspector { width: 228px; }
.irow { display: flex; height: 24px; border-bottom: 1px solid #555; }
.irow:last-child { border: 0; height: 22px; }
.irow p { display: flex; justify-content: space-between; align-items: center; padding: 0 5px 0 4px; border-left: 1px solid #555; }
.irow p:first-child { border-left: 0; padding-left: 2px; }
.two p { flex: 1; }
.three p { width: 74px; }
.perf { width: 121px; }
.perfbody { margin-left: 27px; border-left: 1px solid #555; }
.perfrow { display: flex; gap: 6px; height: 24px; padding: 3px 0 0 3px; }
.perfbar { flex: 1; }
.scale { display: flex; justify-content: space-between; font: 7px/10px "Liberation Sans", Arial, sans-serif; white-space: nowrap; }
.bar { height: 6px; margin-top: 2px; background: #444; }
.bar i { display: block; height: 6px; background: #f7c46c; }

.work { flex: 1; display: flex; gap: 6px; min-height: 0; }
.left { width: 210px; flex: none; display: flex; flex-direction: column; background: #c6c6c6; border-radius: 0 4px 0 0; }
.tabs { display: flex; height: 19px; background: linear-gradient(#dcdcdc 14px, #c6c6c6 14px); border-radius: 0 4px 0 0; }
.tab { width: 39px; height: 19px; border-right: 1px solid #8c8c8c; border-bottom: 1px solid #999; }
.tab.first { width: 47px; }
.tab.rest { flex: 1; border-right: 0; }
.tab.on { background: linear-gradient(#57cff6 14px, #49b9e2 14px); }
.tab.on b { width: 16px; height: 15px; border: 1px solid #14242c; color: #14242c; font: bold 13px/14px "Liberation Sans", Arial, sans-serif; }
.lines { width: 11px; height: 10px; background: repeating-linear-gradient(#333 0 2px, transparent 2px 4px); }
.leftbody { flex: 1; margin: 5px 4px 0 0; background: #1e1e1e; padding: 4px 5px 0 1px; border-top: 1px solid #2d2d2d; }
.sections { height: 32px; background: #434444; display: flex; align-items: center; padding-left: 9px; }
.plus { width: 13px; height: 13px; background: linear-gradient(#eee, #eee) center / 13px 3px no-repeat, linear-gradient(#eee, #eee) center / 3px 13px no-repeat; }
h3 { flex: 1; font: bold 12px/16px "Open Sans", "Noto Sans", sans-serif; color: #f2f2f2; text-align: center; }
.sections h3 { padding-right: 18px; }
.arrs { margin-top: 311px; height: 90px; background: #434444; padding: 0 3px; }
.arrhead { display: flex; align-items: center; height: 32px; padding: 0 1px 0 2px; }
.arrsel { height: 26px; background: #2b2b2b; border-radius: 2px; display: flex; align-items: center; padding-right: 6px; }
.arrsel select { flex: 1; height: 26px; }
.arrtime { display: flex; justify-content: space-between; align-items: center; height: 34px; padding: 0 5px; font: 12px/16px "DejaVu Sans Condensed", "Noto Sans", sans-serif; color: #999; }
.arrtime button { border: 6px solid transparent; border-left: 11px solid #a3a3a3; border-right: 0; }

.main { flex: 1; min-width: 0; background: #c6c6c6; border-radius: 4px; display: flex; flex-direction: column; position: relative; margin-bottom: 7px; }
.menubar { display: flex; height: 19px; flex: none; padding-left: 6px; background: linear-gradient(#e2e2e2, #d8d8d8 2px, #d6d6d6 14px, #c8c8c8 14px); border-bottom: 1px solid #e6e6e6; border-radius: 4px 4px 0 0; }
.menu { width: 79px; height: 19px; color: #16161e; font: 12px/16px "DejaVu Sans Condensed", "Noto Sans", sans-serif; border-right: 1px solid #8c8c8c; border-bottom: 1px solid #8c8c8c; border-left: 1px solid #eee; padding: 0 5px 1px 0; }
.menu span { flex: 1; text-align: center; white-space: nowrap; padding-right: 6px; }
.menu i { border: 3px solid transparent; border-top-color: #222; border-bottom: 0; }
.xf { width: 29px; padding: 0; border-left: 1px solid #8c8c8c; }
.off { width: 85px; display: flex; align-items: center; padding: 0 2px 0 3px; }
.off select { flex: 1; padding: 0 0 0 7px; }
.cnr { align-self: flex-end; }
.end { width: 20px; }

.rulerrow { display: flex; height: 43px; flex: none; }
.now { width: 238px; display: flex; gap: 5px; padding: 7px 0 0 5px; flex: none; }
.now output { width: 154px; height: 26px; background: #383939; border: 1px solid #222; border-radius: 2px; color: #57cdf5; text-align: center; font: bold 21px/23px "Liberation Sans", Arial, sans-serif; }
.now button { width: 26px; height: 26px; border: 1px solid #8a8a8a; border-radius: 2px; background: linear-gradient(#e3e3e3, #cfcfcf 60%, #a9a9a9); color: #333; font-size: 20px; }
.ruler { flex: 1; min-width: 0; height: 32px; margin-top: 4px; background: linear-gradient(#a2a2a2 25px, #858585 25px, #858585 26px, #a6a6a6 26px); border: 1px solid #858585; border-top: 1px solid #606060; overflow: hidden; }
.ruler text { font: 10px "DejaVu Sans Condensed", "Noto Sans", sans-serif; fill: #3a3a3a; }
.miniadd { width: 13px; height: 14px; margin: 21px 5px 0 2px; background: #8a8a8a; border: 1px solid #777; }

.arrangerrow { display: flex; height: 101px; margin-right: 20px; flex: none; }
.arrname { width: 212px; margin: 0 23px 0 3px; background: #2c2c2c; display: flex; align-items: center; padding: 0 6px 2px 9px; flex: none; }
.arrname h3 { text-align: left; }
.arrlane { flex: 1; background: #2c2c2c; display: flex; align-items: center; justify-content: center; padding-bottom: 2px; font: 13px/18px "Noto Sans", "Open Sans", sans-serif; color: #8f8f8f; }

.tracks { margin-top: 12px; border: solid #9e9e9e; border-width: 2px 3px 2px 2px; display: flex; flex: none; background: #c6c6c6; margin-left: 1px; }
.rows { flex: 1; min-width: 0; }
.row { display: flex; height: 120px; overflow: hidden; }
.row.mini { height: 23px; }
.row:last-child { height: 119px; }
.head { width: 212px; flex: none; background: linear-gradient(90deg, #343535 6px, #505151 6px, #505151 7px, #434444 7px); border-left: 2px solid #222; border-right: 1px solid #222; border-top: 2px solid #1b1b1b; display: flex; padding: 2px 2px 1px 6px; }
.mini .head { border-top: 0; }
.side { width: 60px; display: flex; flex-direction: column; }
.idline { display: flex; align-items: center; height: 20px; justify-content: flex-end; }
.num { font: 12px/16px "DejaVu Sans Condensed", "Noto Sans", sans-serif; color: #ddd; }
.idline .num { width: 26px; text-align: center; margin-right: 7px; }
.kind { width: 20px; height: 20px; background: #292929; display: flex; align-items: center; justify-content: center; border-radius: 2px; }
.kind.midi { border: 1px solid #8e8e8e; }
.kind.audio { width: 18px; height: 16px; margin-right: 1px; }
.bigkind { width: 32px; height: 32px; background: #2a2a2a; margin: 5px 0 0 26px; display: flex; align-items: center; justify-content: center; }
.lower { display: flex; gap: 5px; margin: 37px 0 0 4px; }
.ctl { width: 94px; margin-left: 3px; display: flex; flex-direction: column; flex: none; }
.tname { height: 20px; width: 94px; background: #2a2a2a; color: #52c6f0; font: bold 11px/18px "Liberation Sans", Arial, sans-serif; padding: 0 3px; border: 1px solid #383838; border-radius: 3px; }
.tname.sel { background: #c9ebf8; color: #111; border: 1px solid #e8e8e8; border-radius: 0; }
.tbs { display: flex; gap: 5px; padding: 0 1px; }
.ctl .tbs:nth-child(2) { margin-top: 5px; }
.tb { width: 19px; height: 19px; background: linear-gradient(#8b8b8b, #7b7b7b 48%, #6c6c6c 50%, #747474); border: 1px solid #262626; border-top-color: #555; border-radius: 2px; color: #eaeaea; font-size: 12px; line-height: 14px; position: relative; }
.tb.cyan { background: linear-gradient(#66d3fb, #41b3df); }
.tb.read { background: linear-gradient(#a4c6e8, #82a9d6); color: #1d2c44; }
.tb small { position: absolute; right: 1px; bottom: 0; font: bold 9px/9px "Liberation Sans", Arial, sans-serif; color: #1a1a1a; }
.edit { height: 19px; margin: 6px 1px; width: 92px; display: flex; align-items: center; background: linear-gradient(#858585, #6b6b6b); border: 1px solid #242424; border-radius: 2px; color: #f2f2f2; font: 12px/16px "DejaVu Sans Condensed", "Noto Sans", sans-serif; }
.edit select { flex: 1; height: 17px; padding: 0 2px; border-right: 1px solid #3c3c3c; }
.edit .tri { margin: 0 4px; border-top-color: #d8d8d8; }
.chev { margin: 5px 4px 0 17px; }
.vu { width: 14px; border: 1px solid #5a5a5a; border-radius: 2px; display: flex; justify-content: center; gap: 2px; padding: 2px 0; background: #3e3f3f; margin: 1px 0; }
.vu i { width: 3px; background: repeating-linear-gradient(#6e6e6e 0 1px, #4a4a4a 1px 2px); }

.keys { width: 24px; flex: none; padding: 22px 0 0 3px; border-right: 1px solid #222; position: relative; background: linear-gradient(#8c8c8c, #8c8c8c) 3px 2px / 17px 1px no-repeat; color: #14142a; }
.mini .keys { background: none; padding: 5px 4px; text-align: right; }
.ctext { font: 9px "DejaVu Sans Condensed", sans-serif; }
.db { font: 8px/9px "DejaVu Sans Condensed", "Noto Sans", sans-serif; padding: 8px 5px 0 0; text-align: right; display: flex; flex-direction: column; }
.db .mid { padding: 9px 0; margin-right: -2px; }
.lane { flex: 1; min-width: 0; position: relative; background: #434444; display: flex; overflow: hidden; }
.grid { position: absolute; left: -1px; top: 0; }
.clip { position: relative; flex: none; border: solid #1b1b1b; border-width: 2px 1px 1px 0; }
.clip header { height: 19px; background: #2b2b2b; border-top: 1px solid #484848; border-bottom: 1px solid #5c5c5c; display: flex; justify-content: space-between; padding: 1px 0 0 3px; color: #a3a3a3; line-height: 15px; white-space: nowrap; }

.vscroll { width: 16px; flex: none; background: #c6c6c6; display: flex; flex-direction: column; align-items: center; padding-bottom: 2px; }
.track { flex: 1; width: 16px; background: #efefef; display: flex; flex-direction: column; align-items: center; margin-bottom: 1px; }
.up { border: 4px solid transparent; border-top: 0; border-bottom: 7px solid #555; margin: 4px 0 5px; }
.down { border: 4px solid transparent; border-bottom: 0; border-top: 7px solid #555; margin-bottom: 4px; }
.thumb { width: 12px; flex: 283; background: #c6c6c6; }
.space { flex: 147; }
.vz { width: 14px; height: 8px; margin: 2px 0; background: linear-gradient(90deg, #3a3a3a 11px, #c6c6c6 11px); border: 1px solid #333; }

.bottom { display: flex; margin-top: 3px; height: 22px; flex: none; padding-right: 3px; }
.bleft { width: 214px; border-top: 1px solid #222; display: flex; justify-content: flex-end; margin: 0 23px 0 1px; flex: none; }
.bleft button { width: 19px; height: 20px; margin-top: 1px; background: linear-gradient(#e0e0e0, #b0b0b0); border: 1px solid #777; border-radius: 2px; }
.hscroll { flex: 1; background: #efefef; border-top: 2px solid #161616; display: flex; align-items: center; padding: 0 6px; }
.la { border: 4px solid transparent; border-left: 0; border-right: 7px solid #555; margin-right: 7px; }
.ra { border: 4px solid transparent; border-right: 0; border-left: 7px solid #555; margin-left: auto; }
.hthumb { width: 15px; height: 16px; background: #c4c4c4; }
.hz { width: 66px; border-top: 2px solid #161616; display: flex; align-items: center; gap: 3px; padding-left: 4px; }
.hz i { width: 8px; height: 18px; border: 1px solid #333; background: linear-gradient(#d5d5d5 11px, #3a3a3a 11px); }

.playhead { position: absolute; left: 613px; top: 20px; width: 23px; bottom: 24px; pointer-events: none; background: linear-gradient(90deg, rgba(120, 120, 120, .45) 1px, #f4f4f4 1px, #f4f4f4 2px, rgba(120, 120, 120, .45) 2px) 10px 0 / 3px 100% no-repeat; }
.ibeam { position: absolute; left: 839px; top: 294px; }

.right { width: 17px; flex: none; background: #c6c6c6; border-radius: 4px 0 0 0; display: flex; flex-direction: column; overflow: hidden; }
.rb { width: 17px; height: 24px; justify-content: flex-start; padding-left: 4px; border-bottom: 1px solid #8c8c8c; overflow: hidden; }
.rb.top { height: 19px; padding-left: 6px; border-bottom-color: #e6e6e6; }
.vtext { margin-top: 451px; padding-left: 3px; overflow: hidden; flex: 1; min-height: 0; display: flex; align-items: flex-start; }
.vtext span { writing-mode: vertical-rl; transform: rotate(180deg); font: bold 12px/14px "Liberation Sans", Arial, sans-serif; color: #3a3a3a; white-space: nowrap; flex: none; }
</style>
